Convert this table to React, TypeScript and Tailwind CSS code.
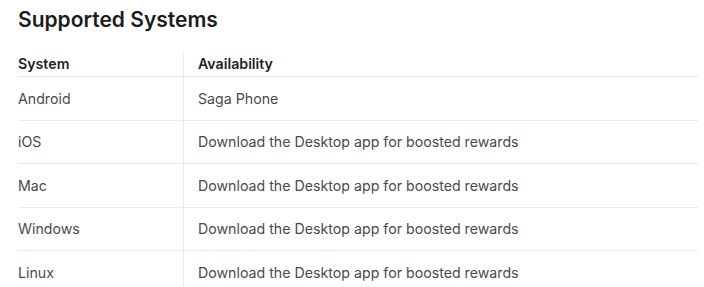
import React from "react";

const rows: [string, string][] = [
  ["Android", "Saga Phone"],
  ["iOS", "Download the Desktop app for boosted rewards"],
  ["Mac", "Download the Desktop app for boosted rewards"],
  ["Windows", "Download the Desktop app for boosted rewards"],
  ["Linux", "Download the Desktop app for boosted rewards"],
];

export default function App() {
  return (
    <div
      className="w-[704px] h-[287px] bg-white overflow-hidden pl-[18px] pr-[6px]"
      style={{ fontFamily: "Inter, 'Noto Sans', sans-serif" }}
    >
      <h2 className="pt-[5px] text-[21px] leading-[29px] font-semibold text-[#1c1c1c]">
        Supported Systems
      </h2>
      <div className="mt-[17px] w-[680px]">
        <div className="grid grid-cols-[166px_1fr] border-b border-[#e6e6e6] h-[26px] text-[14.2px] font-semibold text-[#1f1f1f]">
          <div className="border-r border-[#ececec] flex items-center">System</div>
          <div className="pl-[14px] flex items-center">Availability</div>
        </div>
        {rows.map(([s, a], i) => (
          <div
            key={s}
            className={
              i < rows.length - 1
                ? "grid grid-cols-[166px_1fr] border-b border-[#ececec] h-[43.5px] text-[14.2px] text-[#4a4a4a]"
                : "grid grid-cols-[166px_1fr] h-[43.5px] text-[14.2px] text-[#4a4a4a]"
            }
          >
            <div className="border-r border-[#ececec] flex items-center">{s}</div>
            <div className="pl-[14px] flex items-center">{a}</div>
          </div>
        ))}
      </div>
    </div>
  );
}
